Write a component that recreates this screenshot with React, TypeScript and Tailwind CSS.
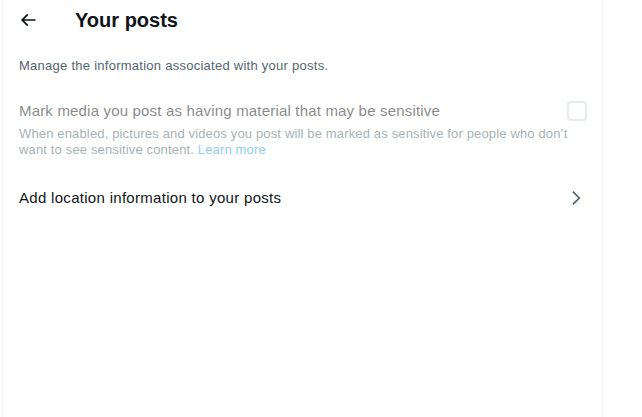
function Icon({ d, className }: { d: string; className?: string }) {
    return (
        <svg viewBox="0 0 24 24" className={className} fill="currentColor" aria-hidden="true">
            <path d={d} />
        </svg>
    )
}

const ARROW_LEFT = 'M7.414 13l5.043 5.04-1.414 1.42L3.586 12l7.457-7.46 1.414 1.42L7.414 11H21v2H7.414z'
const CHEVRON_RIGHT = 'M14.586 12L7.543 4.96l1.414-1.42L17.414 12l-8.457 8.46-1.414-1.42L14.586 12z'

export default function App() {
    return (
        <div
            className="w-[642px] h-[417px] bg-white overflow-hidden"
            style={{ fontFamily: '"Liberation Sans", Arial, sans-serif' }}
        >
            <div className="ml-[2px] w-[601px] h-full border-x border-[#eff3f4] flex flex-col">
                {/* Header */}
                <div className="h-[40px] px-4 flex items-center shrink-0">
                    <div className="w-[56px] flex items-center">
                        <Icon d={ARROW_LEFT} className="w-5 h-5 -ml-px text-[#0f1419]" />
                    </div>
                    <h2 className="text-[20px] leading-6 font-bold text-[#0f1419]">Your posts</h2>
                </div>

                {/* Description */}
                <div className="px-4 pt-[18px] pb-3">
                    <p className="text-[13px] leading-4 tracking-[0.26px] text-[#536471]">
                        Manage the information associated with your posts.
                    </p>
                </div>

                {/* Sensitive media (disabled) */}
                <div className="opacity-50 px-4 pt-[15px] pb-3">
                    <div className="flex items-center justify-between gap-4">
                        <div className="text-[15px] leading-5 tracking-[0.18px] text-[#0f1419]">
                            Mark media you post as having material that may be sensitive
                        </div>
                        <div className="w-5 h-5 rounded-[4px] border-2 border-[#cfd9de] shrink-0 -mr-px" />
                    </div>
                    <p className="mt-[5px] text-[13px] leading-4 tracking-[0.15px] text-[#536471]">
                        When enabled, pictures and videos you post will be marked as sensitive for people who don’t want to see sensitive content.{' '}
                        <span className="text-[#1d9bf0]">Learn more</span>
                    </p>
                </div>

                {/* Location */}
                <div className="mt-[6px] px-4 py-3 flex items-center justify-between gap-4">
                    <div className="text-[15px] leading-5 tracking-[0.3px] text-[#0f1419]">
                        Add location information to your posts
                    </div>
                    <Icon d={CHEVRON_RIGHT} className="w-5 h-5 text-[#536471] shrink-0" />
                </div>
            </div>
        </div>
    )
}
